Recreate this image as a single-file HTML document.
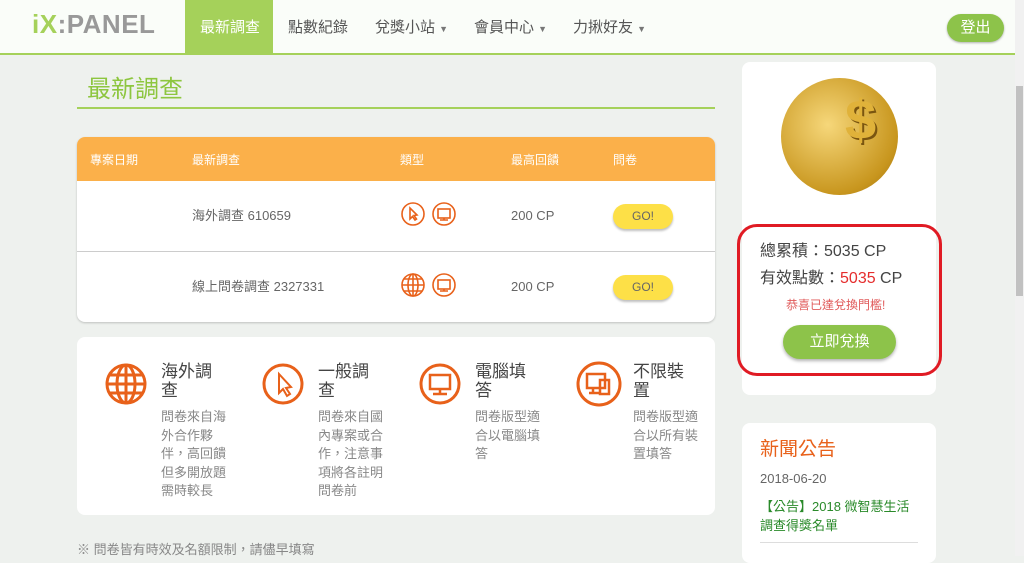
<!DOCTYPE html>
<html><head><meta charset="utf-8"><style>
*{margin:0;padding:0;box-sizing:border-box}
body{width:1024px;height:556px;overflow:hidden;background:#eef1ee;font-family:"Liberation Sans","Noto Sans CJK TC",sans-serif;position:relative;color:#555}
.abs{position:absolute}
.hdr{left:0;top:0;width:1015px;height:55px;background:#fafdf9;border-bottom:2px solid #a5d15a}
.logo{left:32px;top:10px;font-size:26px;line-height:28px;font-weight:bold;color:#999;letter-spacing:0.5px}
.logo b{color:#a5d15a}
.nav{top:0;height:54px;line-height:56px;font-size:15px;color:#555}
.car{font-size:9px;color:#777}
.card{background:#fff;border-radius:8px}
.th{font-size:12px;color:#fff;top:152px;line-height:16px}
.td{font-size:13px;color:#666;line-height:16px}
.go{width:60px;height:25px;border-radius:13px;background:#fde047;color:#666;font-size:12px;text-align:center;line-height:25px;box-shadow:0 2px 2px rgba(0,0,0,.25)}
.feat h3{position:absolute;font-size:17px;font-weight:normal;color:#444;line-height:19px;width:60px}
.feat p{position:absolute;font-size:13px;color:#888;line-height:18.5px;width:65px}
</style></head><body>
<div class="abs hdr"></div>
<div class="abs logo"><b>iX</b>:PANEL</div>
<div class="abs" style="left:185px;top:0;width:88px;height:54px;background:#a5d15a"></div>
<div class="abs nav" style="left:200px;color:#fff">最新調查</div>
<div class="abs nav" style="left:288px">點數紀錄</div>
<div class="abs nav" style="left:375px">兌獎小站 <span class="car">▼</span></div>
<div class="abs nav" style="left:474px">會員中心 <span class="car">▼</span></div>
<div class="abs nav" style="left:573px">力揪好友 <span class="car">▼</span></div>
<div class="abs" style="left:947px;top:14px;width:57px;height:28px;border-radius:14px;background:#8dc34a;color:#fff;font-size:15px;text-align:center;line-height:28px;box-shadow:0 1px 2px rgba(0,0,0,.3)">登出</div>
<div class="abs" style="left:1015px;top:0;width:9px;height:556px;background:#f1f1f1"></div>
<div class="abs" style="left:1016px;top:86px;width:7px;height:210px;background:#c1c1c1"></div>

<div class="abs" style="left:87px;top:77px;font-size:24px;line-height:26px;color:#8dc63f">最新調查</div>
<div class="abs" style="left:77px;top:107px;width:638px;height:2px;background:#a5d15a"></div>

<div class="abs card" style="left:77px;top:137px;width:638px;height:185px;box-shadow:0 1px 2px rgba(0,0,0,.2)"></div>
<div class="abs" style="left:77px;top:137px;width:638px;height:44px;background:#fbb04a;border-radius:8px 8px 0 0"></div>
<div class="abs th" style="left:90px">專案日期</div>
<div class="abs th" style="left:192px">最新調查</div>
<div class="abs th" style="left:400px">類型</div>
<div class="abs th" style="left:511px">最高回饋</div>
<div class="abs th" style="left:613px">問卷</div>
<div class="abs" style="left:77px;top:251px;width:638px;height:1px;background:#ccc"></div>
<div class="abs td" style="left:192px;top:208px">海外調查 610659</div>
<div class="abs td" style="left:192px;top:279px">線上問卷調查 2327331</div>
<div class="abs td" style="left:511px;top:208px">200 CP</div>
<div class="abs td" style="left:511px;top:279px">200 CP</div>
<div class="abs go" style="left:613px;top:204px">GO!</div>
<div class="abs go" style="left:613px;top:275px">GO!</div>
<svg class="abs" style="left:400px;top:201px" width="60" height="100" fill="none" stroke="#e8611a" stroke-width="1.6">
<circle cx="13" cy="13" r="11"/><path d="M10 7 L10 18 L12.5 15.5 L15 19 L16.5 18 L14 14.5 L17 14 Z"/>
<circle cx="44" cy="13" r="11"/><rect x="38" y="8" width="12" height="9"/><path d="M44 17v2M40 19h8"/>
<circle cx="13" cy="84" r="11"/><ellipse cx="13" cy="84" rx="5" ry="11"/><path d="M2 84h22M4 78h18M4 90h18M13 73v22"/>
<circle cx="44" cy="84" r="11"/><rect x="38" y="79" width="12" height="9"/><path d="M44 88v2M40 90h8"/>
</svg>

<div class="abs card feat" style="left:77px;top:337px;width:638px;height:178px">
<svg class="abs" style="left:26px;top:24px" width="520" height="50" fill="none" stroke="#e8611a" stroke-width="3">
<circle cx="23" cy="23" r="19"/><ellipse cx="23" cy="23" rx="9" ry="19"/><path d="M4 23h38M7 14h32M7 32h32M23 4v38"/>
<circle cx="180" cy="23" r="19"/><path d="M176 13 L176 32 L180 28 L184 35 L187 33 L183 27 L188 26 Z" stroke-width="2"/>
<circle cx="337" cy="23" r="19"/><rect x="327" y="14" width="20" height="14" stroke-width="2.5"/><path d="M337 28v4M330 33h14" stroke-width="2.5"/>
<circle cx="496" cy="23" r="21"/><rect x="484" y="13" width="18" height="14" stroke-width="2.5"/><rect x="497" y="19" width="9" height="14" stroke-width="2.5"/><path d="M490 27v4M486 32h10" stroke-width="2.5"/>
</svg>
<h3 style="left:84px;top:25px">海外調查</h3><p style="left:84px;top:71px">問卷來自海外合作夥伴，高回饋但多開放題需時較長</p>
<h3 style="left:241px;top:25px">一般調查</h3><p style="left:241px;top:71px">問卷來自國內專案或合作，注意事項將各註明問卷前</p>
<h3 style="left:398px;top:25px">電腦填答</h3><p style="left:398px;top:71px">問卷版型適合以電腦填答</p>
<h3 style="left:556px;top:25px">不限裝置</h3><p style="left:556px;top:71px">問卷版型適合以所有裝置填答</p>
</div>
<div class="abs" style="left:77px;top:542px;font-size:13px;line-height:16px;color:#888">※ 問卷皆有時效及名額限制，請儘早填寫</div>

<div class="abs card" style="left:742px;top:62px;width:194px;height:333px"></div>
<div class="abs" style="left:781px;top:78px;width:117px;height:117px;border-radius:50%;background:radial-gradient(circle at 40% 40%,#f6d77a,#c8961e 70%,#9b6d10)"></div>
<div class="abs" style="left:845px;top:90px;font-size:56px;font-weight:bold;color:#e0b23a;line-height:60px;text-shadow:2px 2px 0 #7a5510">$</div>
<div class="abs" style="left:737px;top:224px;width:205px;height:152px;border:3px solid #e01b24;border-radius:20px"></div>
<div class="abs" style="left:760px;top:243px;font-size:16px;line-height:18px;color:#444">總累積：5035 CP</div>
<div class="abs" style="left:760px;top:270px;font-size:16px;line-height:18px;color:#444">有效點數：<span style="color:#e52d2d">5035</span> CP</div>
<div class="abs" style="left:786px;top:298px;font-size:12px;line-height:15px;color:#e05a5a">恭喜已達兌換門檻!</div>
<div class="abs" style="left:783px;top:325px;width:113px;height:34px;border-radius:17px;background:#8dc34a;color:#fff;font-size:15px;text-align:center;line-height:34px;box-shadow:0 2px 3px rgba(0,0,0,.3)">立即兌換</div>

<div class="abs card" style="left:742px;top:423px;width:194px;height:140px"></div>
<div class="abs" style="left:760px;top:439px;font-size:19px;line-height:22px;color:#e8611a">新聞公告</div>
<div class="abs" style="left:760px;top:471px;font-size:13px;line-height:16px;color:#666">2018-06-20</div>
<div class="abs" style="left:760px;top:497px;font-size:13px;color:#2a8a2a;line-height:19px;width:150px">【公告】2018 微智慧生活調查得獎名單</div>
<div class="abs" style="left:760px;top:542px;width:158px;height:1px;background:#ddd"></div>
</body></html>
